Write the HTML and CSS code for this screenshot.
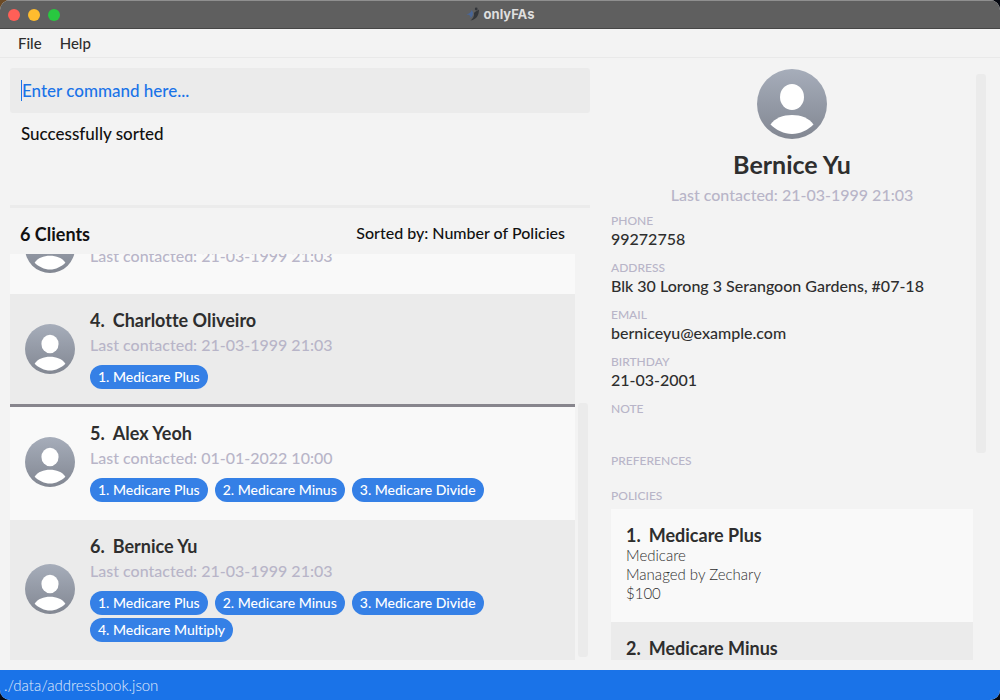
FILE: index.html
```html
<!DOCTYPE html>
<html lang="en">
<head>
<meta charset="utf-8">
<meta name="viewport" content="width=device-width, initial-scale=1">
<title>onlyFAs</title>
<link rel="stylesheet" href="styles.css">
</head>
<body>
<svg class="defs" width="0" height="0" aria-hidden="true">
  <defs>
    <linearGradient id="avatar-fill" x1="0" y1="0" x2="0" y2="1">
      <stop offset="0" stop-color="#a6adba"/>
      <stop offset="1" stop-color="#828792"/>
    </linearGradient>
    <symbol id="avatar" viewBox="0 0 70 70">
      <circle cx="35" cy="35" r="35" fill="url(#avatar-fill)"/>
      <ellipse cx="35" cy="28" rx="12" ry="13" fill="#fff"/>
      <path d="M13.500 55.500C18 49 26 46 35 46C44 46 52 49 56.500 55.500C51 61 43 65 35 65C27 65 19 61 13.500 55.500Z" fill="#fff"/>
    </symbol>
  </defs>
</svg>
<div class="window">
  <header class="titlebar">
    <div class="lights">
      <button class="light close" aria-label="Close"></button>
      <button class="light minimize" aria-label="Minimize"></button>
      <button class="light zoom" aria-label="Zoom"></button>
    </div>
    <div class="title">
      <svg width="14" height="14" viewBox="0 0 14 14" aria-hidden="true">
        <circle cx="10.200" cy="2" r="1.400" fill="#33363b"/>
        <path d="M13 2.500C13 7.500 11 12.500 4.500 13.500C7 11.500 8.500 9.500 8 6C9 4.500 11 4.200 13 2.500Z" fill="#33363b"/>
        <path d="M5.500 3C7.800 5 7.500 9 4.500 11C5 9 3.500 7.500 .5 7.500C3 6.500 5.500 5.500 5.500 3Z" fill="#4a6696"/>
      </svg>
      <span>onlyFAs</span>
    </div>
  </header>
  <nav class="menubar">
    <button class="menu">File</button>
    <button class="menu">Help</button>
  </nav>
  <main class="content">
    <section class="left">
      <label class="command">
        <span class="caret"></span>
        <input class="command-input" type="text" placeholder="Enter command here..." aria-label="Command">
      </label>
      <div class="result">Successfully sorted</div>
      <div class="list-header">
        <h2 class="count">6 Clients</h2>
        <span class="sorted">Sorted by: Number of Policies</span>
      </div>
      <div class="list-area">
        <ul class="clients">
          <li class="client">
            <svg class="avatar" aria-hidden="true"><use href="#avatar"/></svg>
            <div class="info">
              <div class="name"></div>
              <p class="contacted">Last contacted: 21-03-1999 21:03</p>
              <div class="tags"></div>
            </div>
          </li>
          <li class="client shaded selected">
            <svg class="avatar" aria-hidden="true"><use href="#avatar"/></svg>
            <div class="info">
              <h3 class="name"><span>4.</span><span>Charlotte Oliveiro</span></h3>
              <p class="contacted">Last contacted: 21-03-1999 21:03</p>
              <div class="tags"><span class="tag">1. Medicare Plus</span></div>
            </div>
          </li>
          <li class="client">
            <svg class="avatar" aria-hidden="true"><use href="#avatar"/></svg>
            <div class="info">
              <h3 class="name"><span>5.</span><span>Alex Yeoh</span></h3>
              <p class="contacted">Last contacted: 01-01-2022 10:00</p>
              <div class="tags"><span class="tag">1. Medicare Plus</span><span class="tag">2. Medicare Minus</span><span class="tag">3. Medicare Divide</span></div>
            </div>
          </li>
          <li class="client shaded">
            <svg class="avatar" aria-hidden="true"><use href="#avatar"/></svg>
            <div class="info">
              <h3 class="name"><span>6.</span><span>Bernice Yu</span></h3>
              <p class="contacted">Last contacted: 21-03-1999 21:03</p>
              <div class="tags"><span class="tag">1. Medicare Plus</span><span class="tag">2. Medicare Minus</span><span class="tag">3. Medicare Divide</span><span class="tag">4. Medicare Multiply</span></div>
            </div>
          </li>
        </ul>
        <div class="track at-end"><div class="thumb"></div></div>
      </div>
    </section>
    <section class="right">
      <div class="detail">
        <div class="profile">
          <svg class="avatar large" aria-hidden="true"><use href="#avatar"/></svg>
          <h1 class="person">Bernice Yu</h1>
          <p class="contacted">Last contacted: 21-03-1999 21:03</p>
        </div>
        <dl class="fields">
          <div class="field"><dt>PHONE</dt><dd>99272758</dd></div>
          <div class="field"><dt>ADDRESS</dt><dd>Blk 30 Lorong 3 Serangoon Gardens, #07-18</dd></div>
          <div class="field"><dt>EMAIL</dt><dd>berniceyu@example.com</dd></div>
          <div class="field"><dt>BIRTHDAY</dt><dd>21-03-2001</dd></div>
          <div class="field note"><dt>NOTE</dt><dd></dd></div>
          <div class="field preferences"><dt>PREFERENCES</dt></div>
          <div class="field policies-label"><dt>POLICIES</dt></div>
        </dl>
        <ul class="policies">
          <li class="policy">
            <h3 class="name"><span>1.</span><span>Medicare Plus</span></h3>
            <p>Medicare</p>
            <p>Managed by Zechary</p>
            <p>$100</p>
          </li>
          <li class="policy shaded">
            <h3 class="name"><span>2.</span><span>Medicare Minus</span></h3>
          </li>
        </ul>
      </div>
      <div class="track"><div class="thumb"></div></div>
    </section>
  </main>
  <footer class="status">./data/addressbook.json</footer>
</div>
</body>
</html>
```
FILE: styles.css
```css
* { box-sizing: border-box; margin: 0; padding: 0; }
body {
  background: linear-gradient(90deg, #6b4a25 50%, #05070f 50%) top / 100% 50% no-repeat #05070f;
  font-family: Lato, "Open Sans", sans-serif;
  font-size: 16px;
  font-weight: 500;
  font-variant-ligatures: none;
  color: #2e2e2e;
}
ul { list-style: none; }
button { border: 0; background: none; font: inherit; color: inherit; }
.defs { position: absolute; }

.window {
  display: flex;
  flex-direction: column;
  height: 100vh;
  overflow: hidden;
  border-radius: 10px;
  background: #f3f3f3;
}
.titlebar {
  display: grid;
  grid-template-columns: 1fr auto 1fr;
  align-items: center;
  height: 29px;
  padding: 0 8px;
  background: #5f5f5f;
  border-top: 1px solid #8f8f8f;
  border-bottom: 1px solid #464646;
}
.lights { display: flex; gap: 8px; }
.light { width: 12px; height: 12px; border-radius: 50%; }
.close { background: #ff5f57; }
.minimize { background: #febc2e; }
.zoom { background: #28c840; }
.title {
  display: flex;
  align-items: center;
  gap: 4px;
  padding-bottom: 2px;
  font: 700 13px/16px Inter, sans-serif;
  color: #dedede;
}
.menubar {
  display: flex;
  height: 29px;
  padding: 0 9px;
  border-bottom: 1px solid #e9e9e9;
}
.menu { padding: 0 9px; font-size: 15px; line-height: 28px; }

.content { display: flex; flex: 1; min-height: 0; gap: 21px; padding: 10px; }
.left { display: flex; flex-direction: column; flex: 580; min-width: 0; }
.command {
  display: flex;
  align-items: center;
  height: 45px;
  flex: none;
  padding: 0 11px;
  border-radius: 3px;
  background: #ebebeb;
}
.caret { width: 1px; height: 21px; background: #1a73e8; }
.command-input {
  flex: 1;
  border: 0;
  outline: 0;
  background: none;
  font: inherit;
  font-size: 17px;
  color: #1a73e8;
}
.command-input::placeholder { color: #1a73e8; opacity: 1; }
.result {
  flex: none;
  height: 95px;
  padding: 11px;
  border-bottom: 3px solid #ebebeb;
  font-size: 17px;
  line-height: 20px;
  color: #111;
}
.list-header {
  display: flex;
  align-items: center;
  justify-content: space-between;
  flex: none;
  height: 46px;
  padding: 5px 25px 0 10px;
  color: #111;
}
.count { font-size: 18px; font-weight: 700; }
.sorted { padding-bottom: 2px; }
.list-area { display: flex; flex: 1; min-height: 0; gap: 3px; padding-right: 2px; }
.clients {
  display: flex;
  flex-direction: column;
  justify-content: flex-end;
  flex: 1;
  overflow: hidden;
}
.client {
  display: flex;
  align-items: center;
  flex: none;
  gap: 15px;
  padding: 15px;
  background: #f9f9f9;
  border-bottom: 3px solid #f9f9f9;
}
.shaded { background: #ebebeb; border-color: #ebebeb; }
.selected { border-color: #87858d; }
.avatar { width: 50px; height: 50px; flex: none; }
.large { width: 70px; height: 70px; }
.info { flex: 1; }
.name {
  display: flex;
  gap: 8px;
  min-height: 22px;
  font-size: 18px;
  line-height: 22px;
  font-weight: 700;
}
.info .name { margin-bottom: 2px; }
.contacted { line-height: 24px; color: #b8b5c8; }
.tags { display: flex; flex-wrap: wrap; gap: 3px 7px; padding-top: 8px; }
.tag {
  padding: 0 8px;
  border-radius: 12px;
  background: #3580e6;
  color: #fff;
  font-size: 14px;
  line-height: 24px;
}
.track { display: flex; flex-direction: column; width: 10px; padding-bottom: 3px; }
.thumb { border-radius: 3px; background: #ebebeb; height: 63%; }
.at-end { justify-content: flex-end; }

.right { display: flex; flex: 375; min-width: 0; gap: 3px; padding-right: 4px; }
.right .track { padding-top: 6px; }
.right .thumb { height: 65%; }
.detail { display: flex; flex-direction: column; flex: 1; min-width: 0; }
.profile { display: flex; flex-direction: column; align-items: center; padding-top: 1px; }
.person { font-size: 25px; line-height: 30px; font-weight: 700; padding: 10px 0 4px; }
.fields { padding-top: 6px; }
.field { height: 47px; }
.note { height: 52px; }
.preferences { height: 35px; }
.policies-label { height: 21px; }
dt { font-size: 12px; line-height: 16px; color: #b8b5c8; }
dd { line-height: 20px; }
.policies { flex: 1; min-height: 0; overflow: hidden; }
.policy { padding: 15px 15px 19px; background: #f9f9f9; font-size: 15px; line-height: 19px; font-weight: 300; }
.policy.shaded { background: #ebebeb; }

.status {
  height: 30px;
  flex: none;
  padding: 0 4px;
  background: #1a73e8;
  color: #e0ebfb;
  font-size: 15px;
  line-height: 30px;
  font-weight: 300;
}
```
